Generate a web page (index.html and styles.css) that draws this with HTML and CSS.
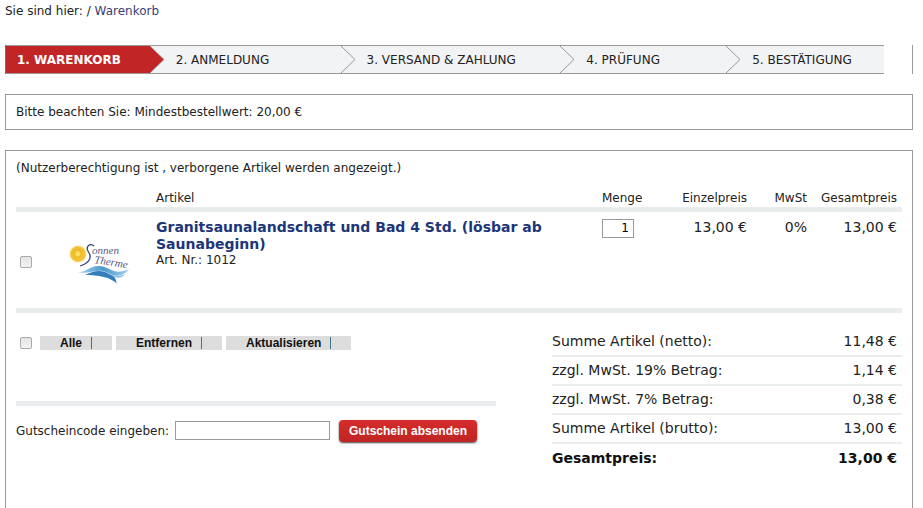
FILE: index.html
```html
<!DOCTYPE html>
<html lang="de">
<head>
<meta charset="utf-8">
<title>Warenkorb</title>
<link rel="stylesheet" href="styles.css">
</head>
<body>
<nav class="breadcrumb">Sie sind hier: / <a href="#">Warenkorb</a></nav>

<div class="steps-frame">
  <ol class="steps">
    <li class="step active">1. WARENKORB
      <svg class="arrow" viewBox="0 0 15 27" aria-hidden="true"><path class="back" d="M0 0H15V27H0z"/><path class="front" d="M0 0L14 13.500L0 27z"/><path class="edge" d="M0 0L14 13.500L0 27"/></svg>
    </li>
    <li class="step">2. ANMELDUNG
      <svg class="arrow" viewBox="0 0 15 27" aria-hidden="true"><path class="edge" d="M0 0L14 13.500L0 27"/></svg>
    </li>
    <li class="step">3. VERSAND &amp; ZAHLUNG
      <svg class="arrow" viewBox="0 0 15 27" aria-hidden="true"><path class="edge" d="M0 0L14 13.500L0 27"/></svg>
    </li>
    <li class="step">4. PRÜFUNG
      <svg class="arrow" viewBox="0 0 15 27" aria-hidden="true"><path class="edge" d="M0 0L14 13.500L0 27"/></svg>
    </li>
    <li class="step">5. BESTÄTIGUNG</li>
  </ol>
</div>

<p class="notice">Bitte beachten Sie: Mindestbestellwert: 20,00 €</p>

<main class="cart">
  <p class="hint">(Nutzerberechtigung ist , verborgene Artikel werden angezeigt.)</p>
  <table class="items">
    <colgroup>
      <col class="c-check"><col class="c-image"><col><col class="c-qty"><col class="c-unit"><col class="c-vat"><col class="c-total">
    </colgroup>
    <thead>
      <tr><th></th><th></th><th>Artikel</th><th>Menge</th><th class="num">Einzelpreis</th><th class="num">MwSt</th><th class="num">Gesamtpreis</th></tr>
    </thead>
    <tbody>
      <tr>
        <td class="middle"><input class="check" type="checkbox" aria-label="Artikel auswählen"></td>
        <td class="middle">
          <svg class="logo" viewBox="0 0 80 55" role="img" aria-label="Sonnen Therme">
            <defs>
              <radialGradient id="sun"><stop offset="0" stop-color="#fff08a"/><stop offset=".3" stop-color="#f6d23c"/><stop offset=".75" stop-color="#f0bd2c"/><stop offset="1" stop-color="#fbe58e"/></radialGradient>
              <linearGradient id="wave"><stop offset="0" stop-color="#a9d4ee"/><stop offset=".5" stop-color="#4b9ace"/><stop offset="1" stop-color="#a2cfea"/></linearGradient>
            </defs>
            <circle cx="18" cy="20" r="8.500" fill="url(#sun)"/>
            <circle cx="17.500" cy="19.500" r="4" fill="none" stroke="#dfa832" stroke-width=".8"/>
            <path d="M34 12C30 8 25 13 28.500 18C32 23 30 29 20 32" fill="none" stroke="#2f3f78" stroke-width="1.300"/>
            <text class="logo-text" x="32" y="20">onnen</text>
            <text class="logo-text" x="34" y="29" transform="rotate(9 34 29)">Therme</text>
            <path d="M17 38C26 39 30 31 40 32C50 33 54 42 69 35C63 43 55 43 48 39C38 33 31 41 17 38z" fill="url(#wave)"/>
            <path d="M25 41C35 36 43 36 49 40C58 43 55 47 57 50C51 43 38 41 25 41z" fill="#347fb9"/>
            <path d="M50 40C57 43 61 42 65 40C61 45 57 45 50 40z" fill="#8cc3e4"/>
          </svg>
        </td>
        <td class="article"><a href="#">Granitsaunalandschaft und Bad 4 Std. (lösbar ab Saunabeginn)</a><span class="number">Art. Nr.: 1012</span></td>
        <td><input class="qty" type="text" value="1" aria-label="Menge"></td>
        <td class="num">13,00 €</td>
        <td class="num">0%</td>
        <td class="num">13,00 €</td>
      </tr>
    </tbody>
  </table>

  <div class="summary">
    <section class="left">
      <div class="actions">
        <input class="check" type="checkbox" aria-label="Alle auswählen">
        <button class="action" type="button">Alle</button>
        <button class="action" type="button">Entfernen</button>
        <button class="action" type="button">Aktualisieren</button>
      </div>
      <form class="voucher">
        <label for="code">Gutscheincode eingeben:</label>
        <input id="code" type="text">
        <button class="send" type="button">Gutschein absenden</button>
      </form>
    </section>
    <table class="totals">
      <tbody>
        <tr><th>Summe Artikel (netto):</th><td>11,48 €</td></tr>
        <tr><th>zzgl. MwSt. 19% Betrag:</th><td>1,14 €</td></tr>
        <tr><th>zzgl. MwSt. 7% Betrag:</th><td>0,38 €</td></tr>
        <tr><th>Summe Artikel (brutto):</th><td>13,00 €</td></tr>
        <tr class="grand"><th>Gesamtpreis:</th><td>13,00 €</td></tr>
      </tbody>
    </table>
  </div>
</main>
</body>
</html>
```
FILE: styles.css
```css
* { box-sizing: border-box; }

html { min-height: 100%; display: flex; flex-direction: column; }

body {
  margin: 0;
  padding: 3px 10px 0 5px;
  flex: 1;
  display: flex;
  flex-direction: column;
  background: #fff;
  color: #222;
  font: 12px/16px Verdana, "DejaVu Sans", sans-serif;
}

a { color: #1d3579; text-decoration: none; }
p { margin: 0; }

.breadcrumb { margin-bottom: 26px; }
.breadcrumb a { color: #3b4074; }

.steps-frame {
  border: solid #999;
  border-width: 0 1px;
  border-left-color: #a55;
  padding-right: 28px;
  margin-bottom: 20px;
}

.steps {
  display: grid;
  grid-template-columns: 159fr 191fr 220fr 166fr 143fr;
  list-style: none;
  margin: 0;
  padding: 0;
  border: solid #999;
  border-width: 1px 0;
  background: #f2f3f5;
}

.step {
  display: flex;
  align-items: center;
  justify-content: space-between;
  height: 27px;
  padding-left: 11px;
  white-space: nowrap;
}

.step.active { background: #c22525; color: #fff; font-weight: bold; }
.arrow { width: 15px; height: 27px; }
.arrow .back { fill: #f2f3f5; }
.arrow .front { fill: #c22525; }
.arrow .edge { fill: none; stroke: #999; }

.notice { border: 1px solid #999; padding: 9px 10px; margin-bottom: 20px; }

.cart { flex: 1; border: 1px solid #999; border-bottom: 0; padding: 9px 10px; }
.hint { margin-bottom: 12px; }

.items { width: 100%; table-layout: fixed; border-collapse: collapse; }
.items th { height: 21px; padding: 2px 5px 0; font-weight: normal; text-align: left; vertical-align: top; }
.items thead, .items tbody { border-bottom: 5px solid #e9eded; }
.items td { height: 101px; padding: 7px 5px; vertical-align: top; font-size: 14px; }
.items .num { text-align: right; }
.items .middle { vertical-align: middle; }
.items td.middle { padding: 4px 4px 0; }
.c-check { width: 40px; }
.c-image { width: 95px; }
.c-qty { width: 70px; }
.c-unit { width: 85px; }
.c-vat { width: 60px; }
.c-total { width: 90px; }

.article a { display: block; max-width: 400px; font-weight: bold; line-height: 17px; }
.article .number { display: block; font-size: 12px; line-height: 14px; }

.logo { display: block; width: 80px; height: 55px; }
.logo-text { font: italic 11px "Liberation Serif", serif; fill: #555d86; }

.check {
  appearance: none;
  display: block;
  width: 12px;
  height: 12px;
  margin: 0;
  border: 1px solid #aaa;
  border-radius: 2px;
  background: linear-gradient(#e4e4e4, #f2f2f2);
}

.qty, #code { display: block; height: 19px; border: 1px solid #999; background: #fff; padding: 0 5px; font: 12px Verdana, "DejaVu Sans", sans-serif; }
.qty { width: 32px; text-align: right; padding: 0 4px; }

.summary { display: flex; justify-content: space-between; align-items: flex-start; padding-top: 14px; }
.left { width: 480px; }

.actions { display: flex; align-items: center; gap: 4px; height: 32px; padding-left: 4px; margin-bottom: 42px; }
.actions .check { margin-right: 4px; }

.action {
  display: flex;
  align-items: center;
  gap: 9px;
  height: 14px;
  border: 0;
  padding: 0 20px;
  background: #ddd;
  color: #111;
  font: bold 12px/14px "Liberation Sans", Arial, sans-serif;
}
.action::after { content: ""; width: 1px; height: 12px; background: #3c7488; }

.voucher { display: flex; align-items: center; gap: 9px; padding-top: 14px; border-top: 5px solid #e9edee; }
.voucher label { white-space: nowrap; width: 150px; }
#code { width: 155px; }

.send {
  height: 22px;
  border: 0;
  border-radius: 4px;
  padding: 0 10px;
  background: linear-gradient(#d62c2c, #bf2424);
  box-shadow: 0 1px 2px #444;
  color: #fff;
  font: bold 12px "Liberation Sans", Arial, sans-serif;
}

.totals { width: 350px; border-collapse: collapse; font-size: 14px; }
.totals tr { border-bottom: 2px solid #e9eded; }
.totals .grand { border-bottom: 0; color: #111; }
.totals th { height: 29px; padding: 0; font-weight: normal; text-align: left; }
.totals td { padding: 0 5px; text-align: right; }
.totals .grand th, .totals .grand td { font-weight: bold; }
```
